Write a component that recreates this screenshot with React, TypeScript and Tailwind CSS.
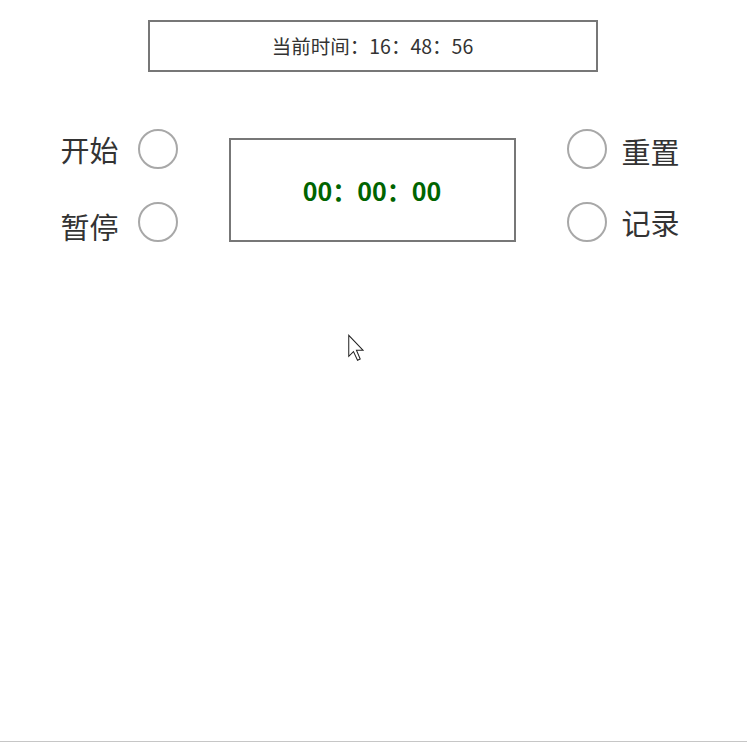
import React from "react";

const font = { fontFamily: '"Noto Sans CJK SC", "Noto Sans", sans-serif' };

function Circle() {
  return <div className="h-10 w-10 shrink-0 rounded-full border-2 border-[#a8a8a8] bg-white" />;
}

export default function App() {
  return (
    <div
      className="relative flex min-h-[742px] w-full flex-col items-center border-b border-[#c6c6c6] bg-white text-[#333]"
      style={font}
    >
      <div className="mt-5 flex h-[52px] w-[450px] -translate-x-px items-center justify-center border-2 border-[#777] text-[19.5px] leading-none">
        当前时间：16：48：56
      </div>

      <div className="mt-[57px] flex -translate-x-px items-end">
        <div className="flex w-[117px] flex-col gap-[33px]">
          <div className="flex h-10 items-center justify-between">
            <span className="text-[29px] leading-none">开始</span>
            <Circle />
          </div>
          <div className="flex h-10 items-center justify-between">
            <span className="translate-y-[4px] text-[29px] leading-none">暂停</span>
            <Circle />
          </div>
        </div>

        <div className="ml-[51px] flex h-[104px] w-[287px] items-center justify-center border-2 border-[#777]">
          <span className="text-[25px] font-bold leading-none text-[#006400]">00：00：00</span>
        </div>

        <div className="ml-[51px] flex w-[118px] flex-col gap-[33px]">
          <div className="flex h-10 items-center gap-[15px]">
            <Circle />
            <span className="translate-y-[2px] text-[29px] leading-none">重置</span>
          </div>
          <div className="flex h-10 items-center gap-[15px]">
            <Circle />
            <span className="text-[29px] leading-none">记录</span>
          </div>
        </div>
      </div>

      <svg
        className="absolute left-[347px] top-[334px]"
        width="17"
        height="27"
        viewBox="-0.5 -0.5 12 20"
      >
        <path
          d="M0.5 0.5 L0.5 16 L4 12.5 L7 19 L9 18 L6.2 11.5 L11 11.5 Z"
          fill="#fff"
          stroke="#222"
          strokeWidth="0.75"
          strokeLinejoin="miter"
        />
      </svg>
    </div>
  );
}
